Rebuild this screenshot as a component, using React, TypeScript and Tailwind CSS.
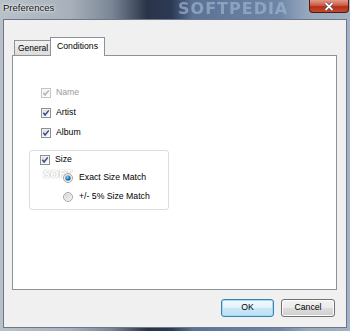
import React from "react";

const font = { fontFamily: '"Liberation Sans", Arial, sans-serif' };

function Check({ disabled }: { disabled?: boolean }) {
  return (
    <svg width="10" height="10" viewBox="0 0 10 10" className="shrink-0">
      <defs>
        <linearGradient id={disabled ? "cbgd" : "cbg"} x1="0" y1="0" x2="1" y2="1">
          <stop offset="0" stopColor={disabled ? "#f0f0f0" : "#dcdcdc"} />
          <stop offset="1" stopColor={disabled ? "#fbfbfb" : "#fafafa"} />
        </linearGradient>
      </defs>
      <rect x="0.5" y="0.5" width="9" height="9" fill="#fff" stroke={disabled ? "#c4c4c4" : "#8e8f8f"} />
      <rect x="1.5" y="1.5" width="7" height="7" fill={`url(#${disabled ? "cbgd" : "cbg"})`} />
      <path d="M2.3 4.8 L4.1 7 L7.8 2.4" fill="none" stroke={disabled ? "#b4b4b4" : "#3b4f8a"} strokeWidth="1.5" />
    </svg>
  );
}

function Radio({ selected }: { selected?: boolean }) {
  return (
    <svg width="10" height="10" viewBox="0 0 10 10" className="shrink-0">
      <defs>
        <radialGradient id="rsel" cx="0.4" cy="0.35" r="0.7">
          <stop offset="0" stopColor="#8fd4f8" />
          <stop offset="0.5" stopColor="#2a8ad0" />
          <stop offset="1" stopColor="#0e3f7a" />
        </radialGradient>
        <linearGradient id="runs" x1="0" y1="0" x2="1" y2="1">
          <stop offset="0" stopColor="#d4d4d4" />
          <stop offset="1" stopColor="#f2f2f2" />
        </linearGradient>
      </defs>
      <circle cx="5" cy="5" r="4.5" fill="#f4f4f4" stroke="#a2a4a6" />
      <circle cx="5" cy="5" r="3.4" fill="url(#runs)" />
      {selected && <circle cx="5" cy="5" r="2.6" fill="url(#rsel)" />}
    </svg>
  );
}

export default function App() {
  return (
    <div
      className="relative w-[350px] h-[331px] flex flex-col overflow-hidden text-[#000]"
      style={font}
    >
      <div className="absolute inset-0 bg-[linear-gradient(90deg,#b8c0c8_0%,#a8b1bb_20%,#7a8696_32%,#2a3448_42%,#2c3a55_49%,#5a7295_55%,#6e87a8_80%,#98a9be_88%,#a3b2c5_100%)]" />
      {/* Title bar */}
      <div className="relative flex h-[19px] items-start">
        <div
          className="absolute left-[178px] top-0 text-[16px] leading-[18px] font-bold tracking-[1px] text-[#9fb3cc] opacity-70 blur-[0.6px] select-none"
          style={{ fontFamily: '"DejaVu Sans", sans-serif' }}
        >
          SOFTPEDIA
        </div>
        <div className="relative pl-[3px] pt-[2px] text-[9.5px] leading-[12px] text-[#111] [text-shadow:0_0_4px_#fff,0_0_2px_#fff]">
          Preferences
        </div>
        <div className="flex-1" />
        <div className="relative mr-[1px] w-[40px] h-[13px] rounded-b-[4px] border border-t-0 border-[#4d1a14] bg-[linear-gradient(180deg,#e39a8a_0%,#cf5a45_45%,#b3301c_55%,#c44a2c_100%)] flex items-center justify-center">
          <svg width="10" height="9" viewBox="0 0 10 9">
            <path d="M1.5 1 L8.5 8 M8.5 1 L1.5 8" stroke="#3a3a3a" strokeWidth="3" />
            <path d="M1.5 1 L8.5 8 M8.5 1 L1.5 8" stroke="#fff" strokeWidth="1.8" />
          </svg>
        </div>
      </div>
      {/* Client */}
      <div className="relative flex-1 mx-[3px] mb-[3px] border border-[#6d7787] bg-[#f0f0f0] flex flex-col pt-[17px] pl-[8px] pr-[8px]">
        {/* tabs */}
        <div className="flex items-end h-[18px] pl-[2px] relative z-10">
          <div className="h-[15px] w-[38px] border border-b-0 border-[#8d9199] bg-[linear-gradient(180deg,#f2f2f2,#dcdcdc)] text-[8.5px] leading-[14px] pl-[3px] -mr-[2px] whitespace-nowrap">
            General
          </div>
          <div className="relative h-[19px] w-[55px] border border-b-0 border-[#8d9199] bg-white text-[8.7px] leading-[16px] pl-[6px] -mb-px">
            Conditions
          </div>
        </div>
        {/* panel */}
        <div className="h-[235px] w-[325px] border border-[#8d9199] bg-white pt-[27px] text-[8.7px]">
          <div className="flex items-center h-[20px] pl-[28px] gap-[5px] text-[#9a9a9a]">
            <Check disabled />
            <span>Name</span>
          </div>
          <div className="flex items-center h-[20px] pl-[28px] gap-[5px]">
            <Check />
            <span>Artist</span>
          </div>
          <div className="flex items-center h-[20px] pl-[28px] gap-[5px]">
            <Check />
            <span>Album</span>
          </div>
          <div className="relative mt-[7px] ml-[16px] w-[140px] h-[60px] rounded-[3px] border border-[#d5dfe5]">
            <div
              className="absolute left-[13px] top-[19px] text-[10px] leading-[10px] font-bold text-white [text-shadow:0_0_1px_#b0b0b0,0_0_1px_#b0b0b0] select-none"
              style={{ fontFamily: '"DejaVu Sans", sans-serif' }}
            >
              SOFT
            </div>
            <div className="relative flex items-center h-[17px] pl-[10px] gap-[5px]">
              <Check />
              <span>Size</span>
            </div>
            <div className="relative flex items-center h-[19px] pl-[33px] gap-[6px]">
              <Radio selected />
              <span>Exact Size Match</span>
            </div>
            <div className="relative flex items-center h-[19px] pl-[33px] gap-[6px]">
              <Radio />
              <span>+/- 5% Size Match</span>
            </div>
          </div>
        </div>
        {/* buttons */}
        <div className="flex justify-end gap-[7px] mt-[9px] pr-[3px]">
          <div className="w-[53px] h-[18px] rounded-[3px] border border-[#3c7fb1] bg-[linear-gradient(180deg,#f2f9fd_0%,#e3f1fa_50%,#c9e6f7_51%,#bfe0f5_100%)] shadow-[inset_0_0_0_1px_#9fdcf5] flex items-center justify-center text-[8.7px]">
            OK
          </div>
          <div className="w-[54px] h-[18px] rounded-[3px] border border-[#707070] bg-[linear-gradient(180deg,#f2f2f2_0%,#ebebeb_50%,#dddddd_51%,#cfcfcf_100%)] shadow-[inset_0_0_0_1px_#fcfcfc] flex items-center justify-center text-[8.7px]">
            Cancel
          </div>
        </div>
      </div>
    </div>
  );
}
